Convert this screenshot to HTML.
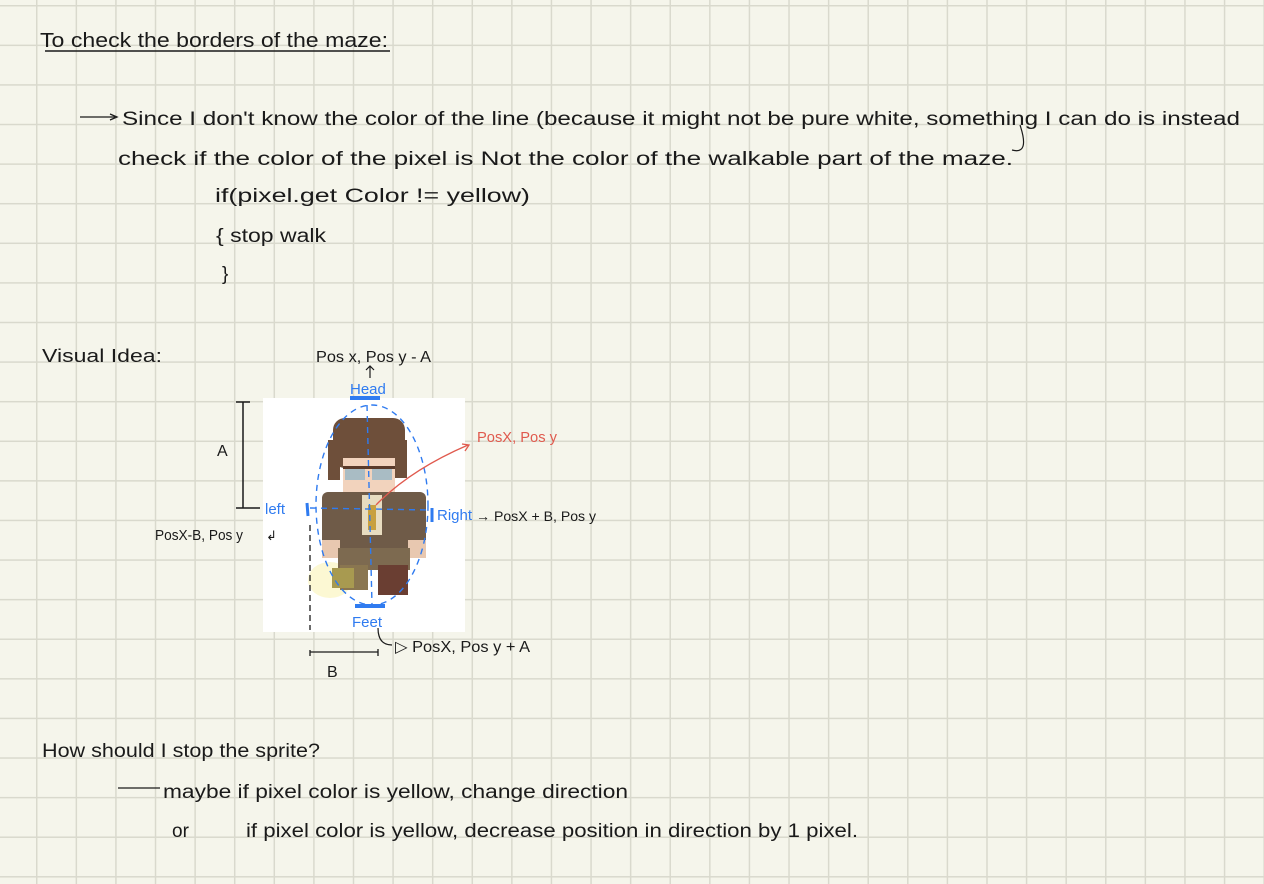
<!DOCTYPE html>
<html><head><meta charset="utf-8"><style>
html,body{margin:0;padding:0;}
body{width:1264px;height:884px;overflow:hidden;background:#f5f5eb;
background-image:linear-gradient(to right,#d9d9cd 1.5px,transparent 1.5px),linear-gradient(to bottom,#d9d9cd 1.5px,transparent 1.5px);
background-size:39.6px 39.6px;background-position:36px 5px;}
svg{position:absolute;left:0;top:0;}
text{font-family:"Liberation Sans",sans-serif;fill:#1a1a1a;}
.b{fill:#2f7bf0;}
.r{fill:#e05a4e;}
</style></head><body>
<svg width="1264" height="884" viewBox="0 0 1264 884">
<text x="40" y="47" font-size="20" textLength="348" lengthAdjust="spacingAndGlyphs">To check the borders of the maze:</text>
<line x1="45" y1="51" x2="390" y2="51" stroke="#1a1a1a" stroke-width="1.5"/>
<line x1="80" y1="117" x2="115" y2="117" stroke="#1a1a1a" stroke-width="1.3"/>
<path d="M110 114 L117 117 L110 120" fill="none" stroke="#1a1a1a" stroke-width="1.3"/>
<text x="122" y="125" font-size="19" textLength="1118" lengthAdjust="spacingAndGlyphs">Since I don't know the color of the line (because it might not be pure white, something I can do is instead</text>
<text x="118" y="165" font-size="19" textLength="895" lengthAdjust="spacingAndGlyphs">check if the color of the pixel is Not the color of the walkable part of the maze.</text>
<path d="M1020 125 Q1030 155 1012 150" fill="none" stroke="#1a1a1a" stroke-width="1.2"/>
<text x="215" y="202" font-size="19" textLength="315" lengthAdjust="spacingAndGlyphs">if(pixel.get Color != yellow)</text>
<text x="216" y="242" font-size="19" textLength="110" lengthAdjust="spacingAndGlyphs">{ stop walk</text>
<text x="222" y="280" font-size="19">}</text>
<text x="42" y="362" font-size="18" textLength="120" lengthAdjust="spacingAndGlyphs">Visual Idea:</text>
<text x="316" y="362" font-size="16" textLength="115" lengthAdjust="spacingAndGlyphs">Pos x, Pos y - A</text>
<path d="M370 378 L370 366 M366 370 L370 366 L374 370" fill="none" stroke="#1a1a1a" stroke-width="1.2"/>
<!-- A bracket -->
<path d="M236 402 L250 402 M243 402 L243 508 M236 508 L260 508" fill="none" stroke="#1a1a1a" stroke-width="1.5"/>
<text x="217" y="456" font-size="16">A</text>
<text x="155" y="540" font-size="15" textLength="88" lengthAdjust="spacingAndGlyphs">PosX-B, Pos y</text>
<!-- image -->
<rect x="263" y="398" width="202" height="234" fill="#ffffff"/>
<!-- sprite -->
<g>
<ellipse cx="330" cy="580" rx="22" ry="18" fill="#fbf6c8" opacity="0.8"/>
<rect x="333" y="418" width="72" height="50" rx="12" fill="#6e4f3a"/>
<rect x="328" y="440" width="12" height="40" fill="#6e4f3a"/>
<rect x="395" y="440" width="12" height="38" fill="#6e4f3a"/>
<rect x="343" y="458" width="52" height="36" fill="#f2d3bd"/>
<rect x="345" y="468" width="20" height="12" fill="#a9bcc4"/>
<rect x="372" y="468" width="20" height="12" fill="#a9bcc4"/>
<rect x="343" y="466" width="52" height="3" fill="#5a3a2a"/>
<rect x="322" y="492" width="104" height="60" rx="6" fill="#6f5b48"/>
<rect x="362" y="495" width="20" height="40" fill="#e8dcc0"/>
<rect x="368" y="505" width="8" height="25" fill="#c8a040"/>
<rect x="322" y="540" width="18" height="18" fill="#e8c8b0"/>
<rect x="408" y="540" width="18" height="18" fill="#e8c8b0"/>
<rect x="338" y="548" width="72" height="22" fill="#7d6a50"/>
<rect x="340" y="565" width="28" height="25" fill="#8a7650"/>
<rect x="378" y="565" width="30" height="30" fill="#6a3e32"/>
<rect x="332" y="568" width="22" height="20" fill="#a89a50"/>
</g>
<!-- blue dashed -->
<g fill="none" stroke="#2f7bf0" stroke-width="1.4" stroke-dasharray="6 5">
<ellipse cx="372" cy="505" rx="56" ry="100"/>
<line x1="367" y1="405" x2="372" y2="605"/>
<line x1="310" y1="508" x2="430" y2="510"/>
</g>
<path d="M307 503 L308 516 M432 508 L432 522" stroke="#2f7bf0" stroke-width="3"/>
<path d="M350 398 L380 398 M355 606 L385 606" stroke="#2f7bf0" stroke-width="4"/>
<path d="M310 525 L310 630" stroke="#1a1a1a" stroke-width="1.3" stroke-dasharray="6 4"/>
<text class="b" x="350" y="394" font-size="15">Head</text>
<text class="b" x="265" y="514" font-size="15">left</text>
<text x="266" y="540" font-size="13">↲</text>
<text class="b" x="437" y="520" font-size="15">Right</text>
<text x="476" y="521" font-size="14" textLength="120" lengthAdjust="spacingAndGlyphs">→ PosX + B, Pos y</text>
<text class="b" x="352" y="627" font-size="15">Feet</text>
<path d="M376 505 Q410 470 468 445" fill="none" stroke="#e05a4e" stroke-width="1.3"/>
<path d="M462 444 L469 445 L465 451" fill="none" stroke="#e05a4e" stroke-width="1.3"/>
<text class="r" x="477" y="442" font-size="15" textLength="80" lengthAdjust="spacingAndGlyphs">PosX, Pos y</text>
<path d="M378 628 Q378 645 392 645" fill="none" stroke="#1a1a1a" stroke-width="1.2"/>
<text x="395" y="652" font-size="16" textLength="135" lengthAdjust="spacingAndGlyphs">▷ PosX, Pos y + A</text>
<path d="M310 650 L310 656 M310 652 L378 652 M378 649 L378 656" fill="none" stroke="#1a1a1a" stroke-width="1.3"/>
<text x="327" y="677" font-size="16">B</text>
<text x="42" y="757" font-size="19" textLength="278" lengthAdjust="spacingAndGlyphs">How should I stop the sprite?</text>
<line x1="118" y1="788" x2="160" y2="788" stroke="#1a1a1a" stroke-width="1.3"/>
<text x="163" y="798" font-size="19" textLength="465" lengthAdjust="spacingAndGlyphs">maybe if pixel color is yellow, change direction</text>
<text x="172" y="837" font-size="19">or</text>
<text x="246" y="837" font-size="19" textLength="612" lengthAdjust="spacingAndGlyphs">if pixel color is yellow, decrease position in direction by 1 pixel.</text>
</svg>
</body></html>
